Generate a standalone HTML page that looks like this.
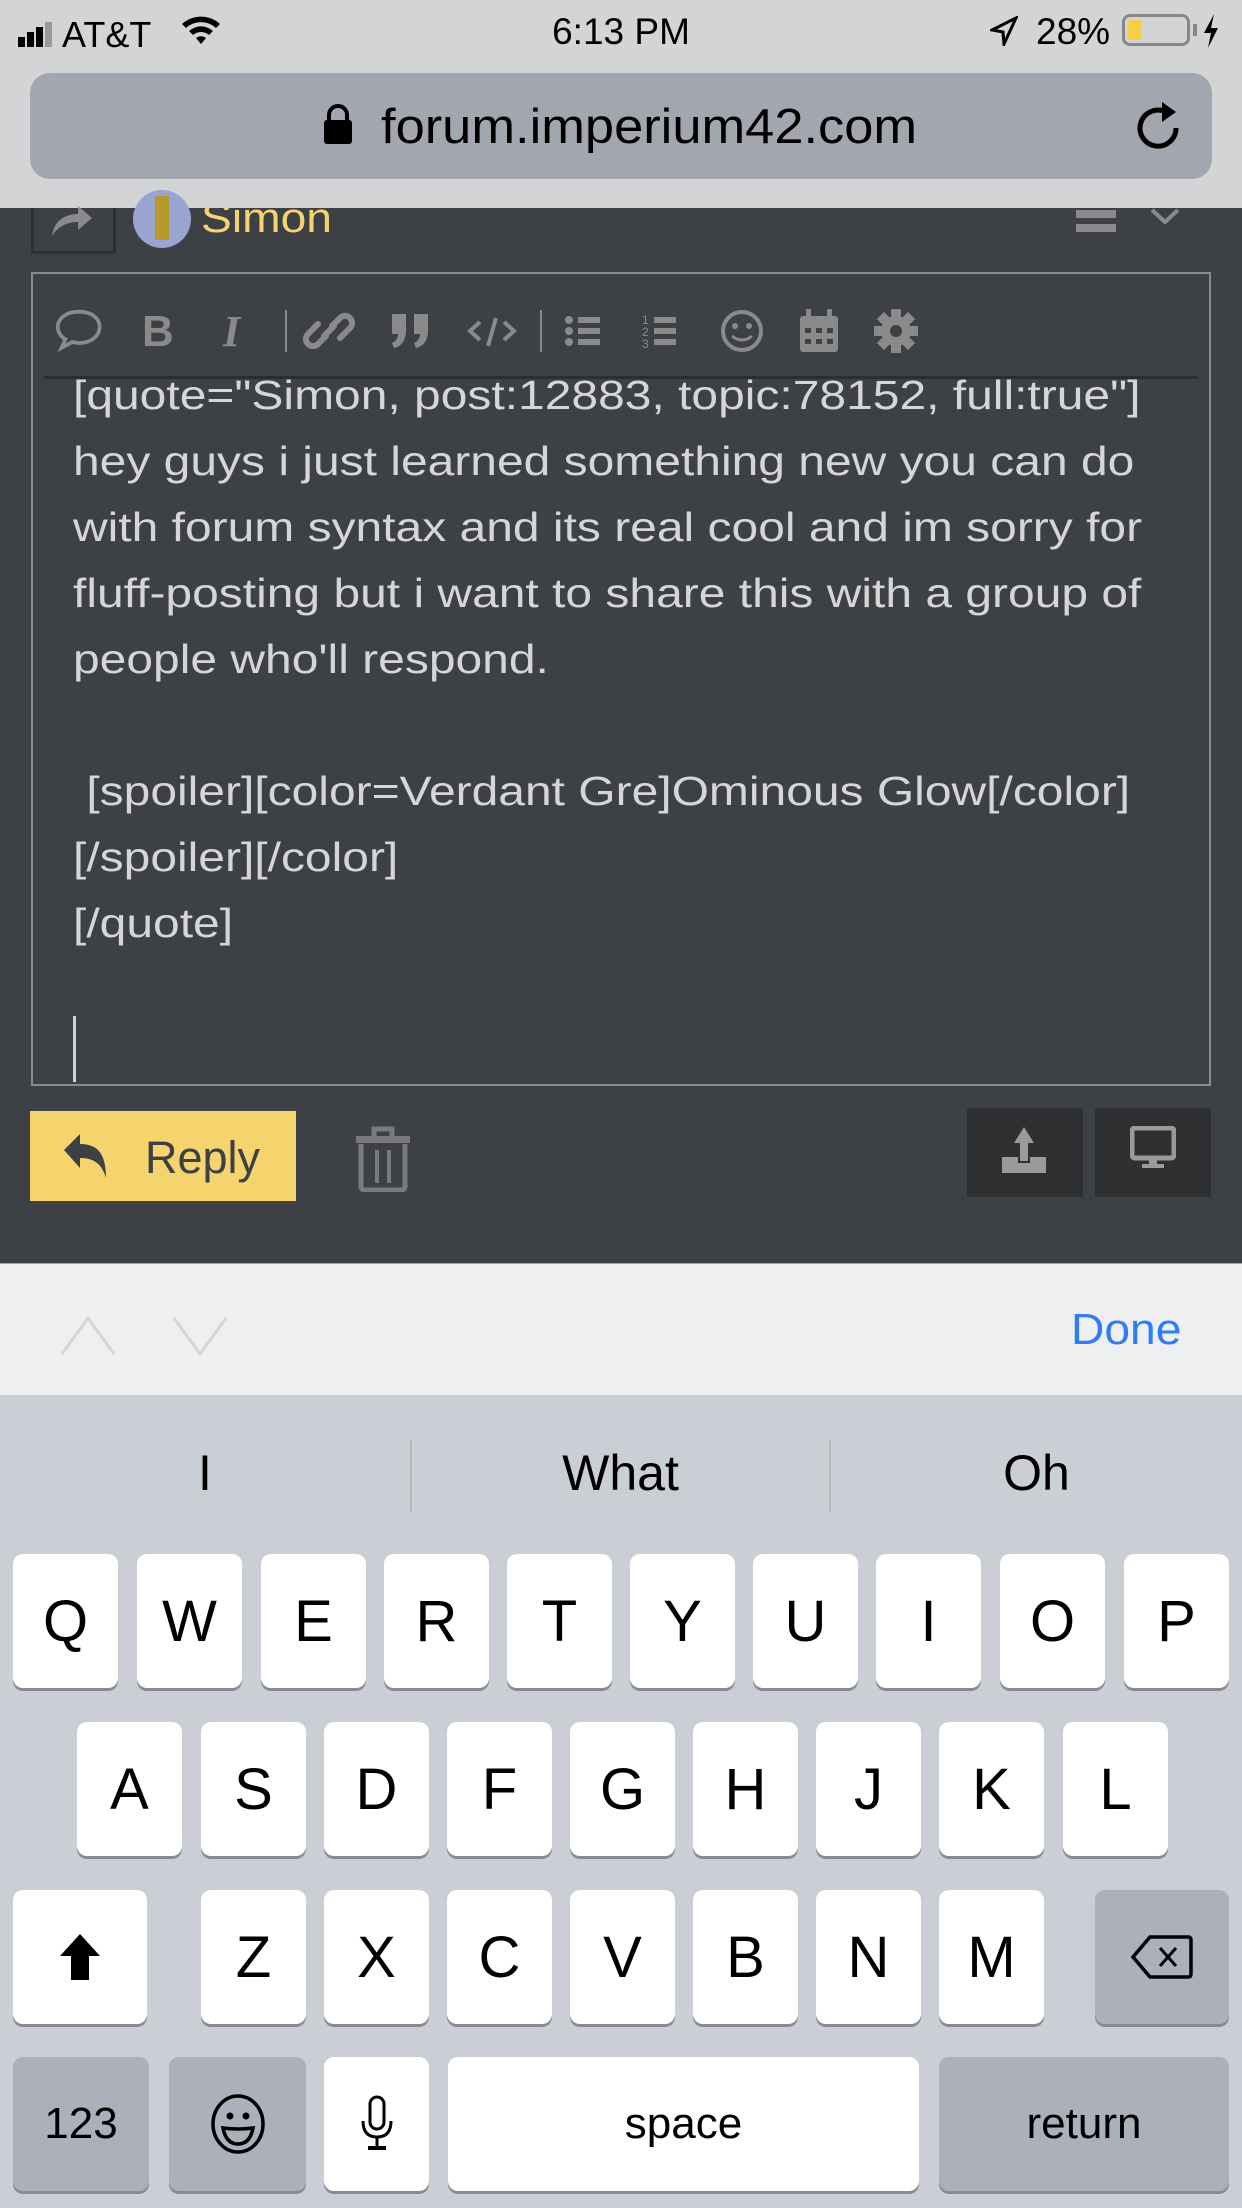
<!DOCTYPE html>
<html><head><meta charset="utf-8"><style>
*{margin:0;padding:0;box-sizing:border-box}
body{width:1242px;height:2208px;position:relative;overflow:hidden;background:#cbced5;font-family:"Liberation Sans",sans-serif}
.a{position:absolute}
.k{position:absolute;width:105px;height:134px;background:#fff;border-radius:10px;box-shadow:0 3px 0 #888b92;font-size:58px;color:#000;display:flex;align-items:center;justify-content:center}
.g{background:#abb0ba}
.t{position:absolute;left:73px;font-size:41px;color:#d6d6d6;white-space:nowrap;transform:scaleX(1.17);transform-origin:0 0}
</style></head><body>
<!-- top -->
<div class="a" style="left:0;top:0;width:1242px;height:208px;background:#d3d4d6"></div>
<div class="a" style="left:18px;top:14px;font-size:36px;color:#000">
<span style="display:inline-block;width:7px;height:10px;background:#000;margin-right:2px"></span><span style="display:inline-block;width:7px;height:15px;background:#000;margin-right:2px"></span><span style="display:inline-block;width:7px;height:20px;background:#000;margin-right:2px"></span><span style="display:inline-block;width:7px;height:25px;background:#999;margin-right:10px"></span>AT&amp;T</div>
<svg class="a" style="left:180px;top:14px" width="42" height="32" viewBox="0 0 42 32"><path d="M2 10 A28 28 0 0 1 40 10 L36 14 A22 22 0 0 0 6 14Z M9 17 A18 18 0 0 1 33 17 L29 21 A12 12 0 0 0 13 21Z M16 24 A8 8 0 0 1 26 24 L21 30Z" fill="#000"/></svg>
<div class="a" style="left:0;width:1242px;top:11px;text-align:center;font-size:37px;color:#000">6:13 PM</div>
<svg class="a" style="left:990px;top:16px" width="28" height="30" viewBox="0 0 28 30"><path d="M26 2 L2 14 L13 16 L14 28Z" fill="none" stroke="#000" stroke-width="3"/></svg>
<div class="a" style="left:1036px;top:11px;font-size:37px;color:#000">28%</div>
<div class="a" style="left:1122px;top:14px;width:68px;height:32px;border:3px solid #888;border-radius:8px"><div style="margin:3px;width:14px;height:20px;background:#f7cf46;border-radius:3px"></div></div>
<div class="a" style="left:1193px;top:24px;width:4px;height:12px;background:#888"></div>
<svg class="a" style="left:1202px;top:14px" width="18" height="34" viewBox="0 0 18 34"><path d="M12 0 L2 19 L9 19 L6 34 L16 14 L9 14Z" fill="#000"/></svg>
<div class="a" style="left:30px;top:73px;width:1182px;height:106px;background:#a3a6ae;border-radius:20px"></div>
<div class="a" style="left:324px;top:104px;width:28px;height:40px"><div style="width:22px;height:24px;border:4px solid #000;border-radius:11px 11px 0 0;margin-left:3px"></div><div style="width:28px;height:24px;background:#000;border-radius:3px;margin-top:-8px"></div></div>
<div class="a" style="left:381px;top:99px;font-size:49px;color:#000;transform:scaleX(1.07);transform-origin:0 0">forum.imperium42.com</div>
<svg class="a" style="left:1136px;top:100px" width="48" height="56" viewBox="0 0 48 56"><path d="M30 12 A18 18 0 1 0 40 28" fill="none" stroke="#000" stroke-width="5"/><path d="M26 2 L40 12 L26 22Z" fill="#000"/></svg>
<!-- dark content -->
<div class="a" style="left:0;top:208px;width:1242px;height:1055px;background:#3d4045"></div>
<div class="a" style="left:31px;top:208px;width:85px;height:46px;border:3px solid #2e3034;border-top:none"></div>
<svg class="a" style="left:50px;top:206px" width="44" height="30" viewBox="0 0 44 30"><path d="M2 30 C4 14 16 8 28 8 L28 0 L42 12 L28 24 L28 16 C18 16 8 20 2 30Z" fill="#8a8a8a"/></svg>
<div class="a" style="left:133px;top:190px;width:58px;height:58px;border-radius:29px;background:#9aa4d2;overflow:hidden"><div style="margin:6px auto;width:14px;height:44px;background:#b59a2a"></div></div>
<div class="a" style="left:201px;top:208px;width:200px;height:32px;overflow:hidden"><div style="font-size:42px;color:#f5d46e;margin-top:-14px;transform:scaleX(1.1);transform-origin:0 0">Simon</div></div>
<div class="a" style="left:1076px;top:210px;width:40px;height:8px;background:#8a8a8a"></div>
<div class="a" style="left:1076px;top:224px;width:40px;height:8px;background:#8a8a8a"></div>
<svg class="a" style="left:1150px;top:208px" width="30" height="16" viewBox="0 0 30 16"><path d="M2 2 L15 14 L28 2" fill="none" stroke="#8a8a8a" stroke-width="4"/></svg>
<div class="a" style="left:31px;top:272px;width:1180px;height:814px;border:2px solid #8a8b8d"></div>
<!-- toolbar -->
<svg class="a" style="left:56px;top:306px" width="900" height="50" viewBox="0 0 900 50" fill="#8a8a8a" stroke="#8a8a8a">
<path d="M26 6 C12 6 4 14 4 22 C4 28 8 33 12 35 L8 44 L19 38 C21 38 24 39 26 39 C40 39 48 31 48 22 C48 13 40 6 26 6Z" fill="none" stroke-width="4" transform="translate(-2,0) scale(0.95)"/>
<text x="86" y="40" font-size="44" font-weight="bold" font-family="Liberation Sans" stroke="none">B</text>
<text x="167" y="40" font-size="44" font-style="italic" font-weight="bold" font-family="Liberation Serif" stroke="none">I</text>
<rect x="229" y="4" width="2" height="42" stroke="none"/>
<path d="M270 30 L262 38 A7 7 0 0 1 252 28 L262 18 M276 20 L284 12 A7 7 0 0 1 294 22 L284 32 M268 30 L278 20" fill="none" stroke-width="6" stroke-linecap="round"/>
<path d="M336 8 h14 v16 c0 10-4 16-12 18 l-2-5 c4-2 6-5 6-9 h-6z M358 8 h14 v16 c0 10-4 16-12 18 l-2-5 c4-2 6-5 6-9 h-6z" stroke="none"/>
<path d="M424 16 L414 25 L424 34 M448 16 L458 25 L448 34 M440 12 L432 40" fill="none" stroke-width="4"/>
<rect x="484" y="4" width="2" height="42" stroke="none"/>
<g stroke="none"><circle cx="513" cy="14" r="4"/><circle cx="513" cy="25" r="4"/><circle cx="513" cy="36" r="4"/><rect x="522" y="11" width="22" height="6"/><rect x="522" y="22" width="22" height="6"/><rect x="522" y="33" width="22" height="6"/>
<text x="586" y="18" font-size="12">1</text><text x="586" y="30" font-size="12">2</text><text x="586" y="42" font-size="12">3</text><rect x="598" y="11" width="22" height="6"/><rect x="598" y="22" width="22" height="6"/><rect x="598" y="33" width="22" height="6"/></g>
<circle cx="686" cy="25" r="19" fill="none" stroke-width="4"/><circle cx="679" cy="20" r="3" stroke="none"/><circle cx="693" cy="20" r="3" stroke="none"/><path d="M676 30 Q686 38 696 30" fill="none" stroke-width="3"/>
<rect x="744" y="10" width="38" height="36" rx="3" stroke="none"/><rect x="750" y="3" width="5" height="10" stroke="none"/><rect x="771" y="3" width="5" height="10" stroke="none"/>
<g fill="#3d4045" stroke="none"><rect x="749" y="22" width="6" height="5"/><rect x="760" y="22" width="6" height="5"/><rect x="771" y="22" width="6" height="5"/><rect x="749" y="33" width="6" height="5"/><rect x="760" y="33" width="6" height="5"/><rect x="771" y="33" width="6" height="5"/></g>
<g transform="translate(840,25)" stroke="none"><circle r="15"/><rect x="-5" y="-22" width="10" height="44"/><rect x="-5" y="-22" width="10" height="44" transform="rotate(45)"/><rect x="-5" y="-22" width="10" height="44" transform="rotate(90)"/><rect x="-5" y="-22" width="10" height="44" transform="rotate(135)"/><circle r="6" fill="#3d4045"/></g>
</svg>
<div class="a" style="left:44px;top:376px;width:1154px;height:3px;background:#2b2d31"></div>
<div class="a" style="left:33px;top:379px;width:1176px;height:705px;overflow:hidden">
<div class="t" style="left:40px;top:-7px">[quote="Simon, post:12883, topic:78152, full:true"]</div>
<div class="t" style="left:40px;top:59px">hey guys i just learned something new you can do</div>
<div class="t" style="left:40px;top:125px">with forum syntax and its real cool and im sorry for</div>
<div class="t" style="left:40px;top:191px">fluff-posting but i want to share this with a group of</div>
<div class="t" style="left:40px;top:257px">people who'll respond.</div>
<div class="t" style="left:40px;top:389px">&nbsp;[spoiler][color=Verdant Gre]Ominous Glow[/color]</div>
<div class="t" style="left:40px;top:455px">[/spoiler][/color]</div>
<div class="t" style="left:40px;top:521px">[/quote]</div>
<div class="a" style="left:40px;top:637px;width:3px;height:66px;background:#d0d0d0"></div>
</div>
<!-- buttons -->
<div class="a" style="left:30px;top:1111px;width:266px;height:90px;background:#f5d46e"></div>
<svg class="a" style="left:62px;top:1132px" width="48" height="48" viewBox="0 0 48 48"><path d="M2 18 L18 2 L18 12 C36 12 44 22 44 46 C40 32 32 26 18 26 L18 36Z" fill="#3d4045"/></svg>
<div class="a" style="left:145px;top:1132px;font-size:45px;color:#3d4045">Reply</div>
<svg class="a" style="left:354px;top:1126px" width="58" height="66" viewBox="0 0 58 66"><rect x="2" y="10" width="54" height="7" fill="#7a7a7a"/><path d="M20 10 V3 H38 V10" fill="none" stroke="#7a7a7a" stroke-width="5"/><path d="M7 18 V60 Q7 64 11 64 H47 Q51 64 51 60 V18" fill="none" stroke="#7a7a7a" stroke-width="5"/><rect x="21" y="24" width="4" height="33" fill="#7a7a7a"/><rect x="33" y="24" width="4" height="33" fill="#7a7a7a"/></svg>
<div class="a" style="left:967px;top:1108px;width:116px;height:89px;background:#2f3031"></div>
<div class="a" style="left:1095px;top:1108px;width:116px;height:89px;background:#2f3031"></div>
<svg class="a" style="left:1000px;top:1125px" width="50" height="50" viewBox="0 0 50 50"><path d="M24 2 L34 18 L28 18 L28 36 L20 36 L20 18 L14 18Z" fill="#9a9a9a"/><path d="M2 32 H18 V38 H30 V32 H46 V48 H2Z" fill="#9a9a9a"/></svg>
<svg class="a" style="left:1130px;top:1126px" width="46" height="44" viewBox="0 0 46 44"><rect x="2" y="2" width="42" height="30" rx="3" fill="none" stroke="#9a9a9a" stroke-width="5"/><rect x="19" y="32" width="8" height="7" fill="#9a9a9a"/><rect x="12" y="38" width="22" height="4" fill="#9a9a9a"/></svg>
<!-- accessory bar -->
<div class="a" style="left:0;top:1263px;width:1242px;height:132px;background:#eeeff1;border-top:1px solid #a0a2a6"></div>
<svg class="a" style="left:60px;top:1310px" width="180" height="46" viewBox="0 0 180 46"><path d="M2 44 L28 8 L54 44" fill="none" stroke="#d4d5d8" stroke-width="3"/><path d="M114 8 L140 44 L166 8" fill="none" stroke="#d4d5d8" stroke-width="3"/></svg>
<div class="a" style="left:1071px;top:1305px;font-size:44px;color:#2f7cf6;transform:scaleX(1.05);transform-origin:0 0">Done</div>
<!-- suggestions -->
<div class="a" style="left:0;top:1444px;width:410px;text-align:center;font-size:50px;color:#000">I</div>
<div class="a" style="left:410px;top:1440px;width:2px;height:72px;background:#b6b8bd"></div>
<div class="a" style="left:412px;top:1444px;width:417px;text-align:center;font-size:50px;color:#000">What</div>
<div class="a" style="left:829px;top:1440px;width:2px;height:72px;background:#b6b8bd"></div>
<div class="a" style="left:831px;top:1444px;width:411px;text-align:center;font-size:50px;color:#000">Oh</div>
<!-- row1 -->
<div class="k" style="left:13px;top:1554px">Q</div><div class="k" style="left:137px;top:1554px">W</div><div class="k" style="left:261px;top:1554px">E</div><div class="k" style="left:384px;top:1554px">R</div><div class="k" style="left:507px;top:1554px">T</div><div class="k" style="left:630px;top:1554px">Y</div><div class="k" style="left:753px;top:1554px">U</div><div class="k" style="left:876px;top:1554px">I</div><div class="k" style="left:1000px;top:1554px">O</div><div class="k" style="left:1124px;top:1554px">P</div>
<!-- row2 -->
<div class="k" style="left:77px;top:1722px">A</div><div class="k" style="left:201px;top:1722px">S</div><div class="k" style="left:324px;top:1722px">D</div><div class="k" style="left:447px;top:1722px">F</div><div class="k" style="left:570px;top:1722px">G</div><div class="k" style="left:693px;top:1722px">H</div><div class="k" style="left:816px;top:1722px">J</div><div class="k" style="left:939px;top:1722px">K</div><div class="k" style="left:1063px;top:1722px">L</div>
<!-- row3 -->
<div class="k" style="left:13px;top:1890px;width:134px"><svg width="44" height="50" viewBox="0 0 44 50"><path d="M22 2 L42 24 L31 24 L31 48 L13 48 L13 24 L2 24Z" fill="#000"/></svg></div>
<div class="k" style="left:201px;top:1890px">Z</div><div class="k" style="left:324px;top:1890px">X</div><div class="k" style="left:447px;top:1890px">C</div><div class="k" style="left:570px;top:1890px">V</div><div class="k" style="left:693px;top:1890px">B</div><div class="k" style="left:816px;top:1890px">N</div><div class="k" style="left:939px;top:1890px">M</div>
<div class="k g" style="left:1095px;top:1890px;width:134px"><svg width="64" height="46" viewBox="0 0 64 46"><path d="M20 3 H58 Q61 3 61 6 V40 Q61 43 58 43 H20 L3 23Z" fill="none" stroke="#000" stroke-width="3.5"/><path d="M30 14 L46 32 M46 14 L30 32" stroke="#000" stroke-width="3"/></svg></div>
<!-- row4 -->
<div class="k g" style="left:13px;top:2057px;width:136px;font-size:44px">123</div>
<div class="k g" style="left:169px;top:2057px;width:137px"><svg width="56" height="60" viewBox="0 0 56 60"><ellipse cx="28" cy="30" rx="25" ry="28" fill="none" stroke="#000" stroke-width="3.5"/><circle cx="20" cy="22" r="3.5"/><circle cx="36" cy="22" r="3.5"/><path d="M13 34 Q28 36 43 34 Q40 50 28 50 Q16 50 13 34Z" fill="none" stroke="#000" stroke-width="3.5"/></svg></div>
<div class="k" style="left:324px;top:2057px"><svg width="34" height="58" viewBox="0 0 34 58"><rect x="10" y="2" width="14" height="32" rx="7" fill="none" stroke="#000" stroke-width="3"/><path d="M3 26 Q3 42 17 42 Q31 42 31 26" fill="none" stroke="#000" stroke-width="3"/><rect x="15.5" y="42" width="3" height="10"/><rect x="8" y="51" width="18" height="4"/></svg></div>
<div class="k" style="left:448px;top:2057px;width:471px;font-size:44px">space</div>
<div class="k g" style="left:939px;top:2057px;width:290px;font-size:44px">return</div>
</body></html>
